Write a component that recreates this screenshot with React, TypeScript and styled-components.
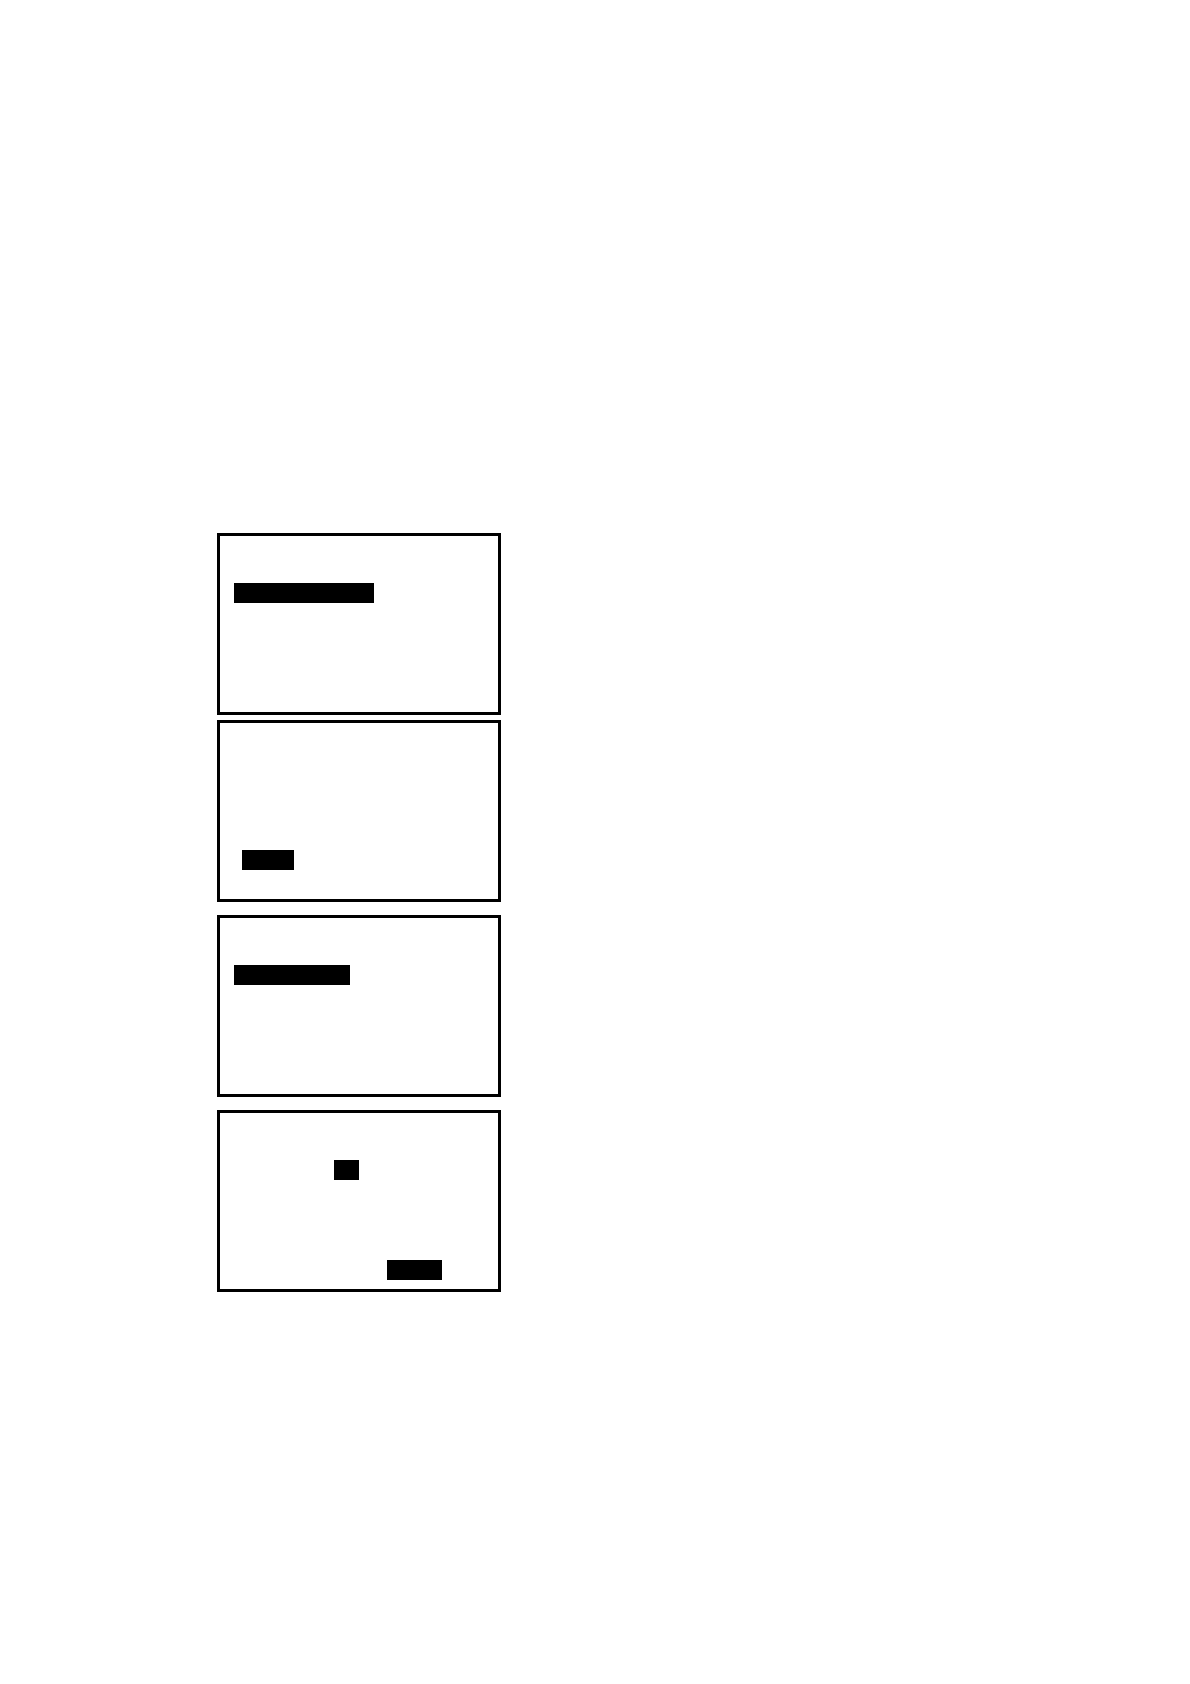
import React from "react";
import styled, { createGlobalStyle } from "styled-components";

const GlobalStyle = createGlobalStyle`
  *, *::before, *::after { box-sizing: border-box; }
  body {
    margin: 0;
    background: #ffffff;
    font-family: "Liberation Sans", Arial, sans-serif;
  }
`;

const Page = styled.main`
  display: flex;
  flex-direction: column;
  min-height: 100vh;
  padding: 533px 24px 64px 217px;
`;

const PanelGroup = styled.div`
  display: flex;
  flex-direction: column;
  gap: 5px;

  & + & {
    margin-top: 13px;
  }
`;

const Panel = styled.section`
  display: grid;
  grid-template-columns: 1fr;
  grid-template-rows: repeat(8, 20px);
  width: 100%;
  max-width: 284px;
  padding: 7px 14px 9px;
  border: 3px solid #000000;
`;

const Highlight = styled.div<{ $line: number; $indent: number; $width: number }>`
  grid-row: ${(p) => p.$line};
  width: ${(p) => p.$width}px;
  margin-left: ${(p) => p.$indent}px;
  background: #000000;
`;

type Bar = { line: number; indent: number; width: number };

// Each group lists its panels; each panel lists the lines it highlights.
const groups: Bar[][][] = [
  [
    [{ line: 3, indent: 0, width: 140 }],
    [{ line: 7, indent: 8, width: 52 }],
  ],
  [[{ line: 3, indent: 0, width: 116 }]],
  [
    [
      { line: 3, indent: 100, width: 25 },
      { line: 8, indent: 153, width: 55 },
    ],
  ],
];

export default function App() {
  return (
    <>
      <GlobalStyle />
      <Page>
        {groups.map((panels, g) => (
          <PanelGroup key={g}>
            {panels.map((bars, p) => (
              <Panel key={p}>
                {bars.map((bar) => (
                  <Highlight
                    key={bar.line}
                    $line={bar.line}
                    $indent={bar.indent}
                    $width={bar.width}
                  />
                ))}
              </Panel>
            ))}
          </PanelGroup>
        ))}
      </Page>
    </>
  );
}
